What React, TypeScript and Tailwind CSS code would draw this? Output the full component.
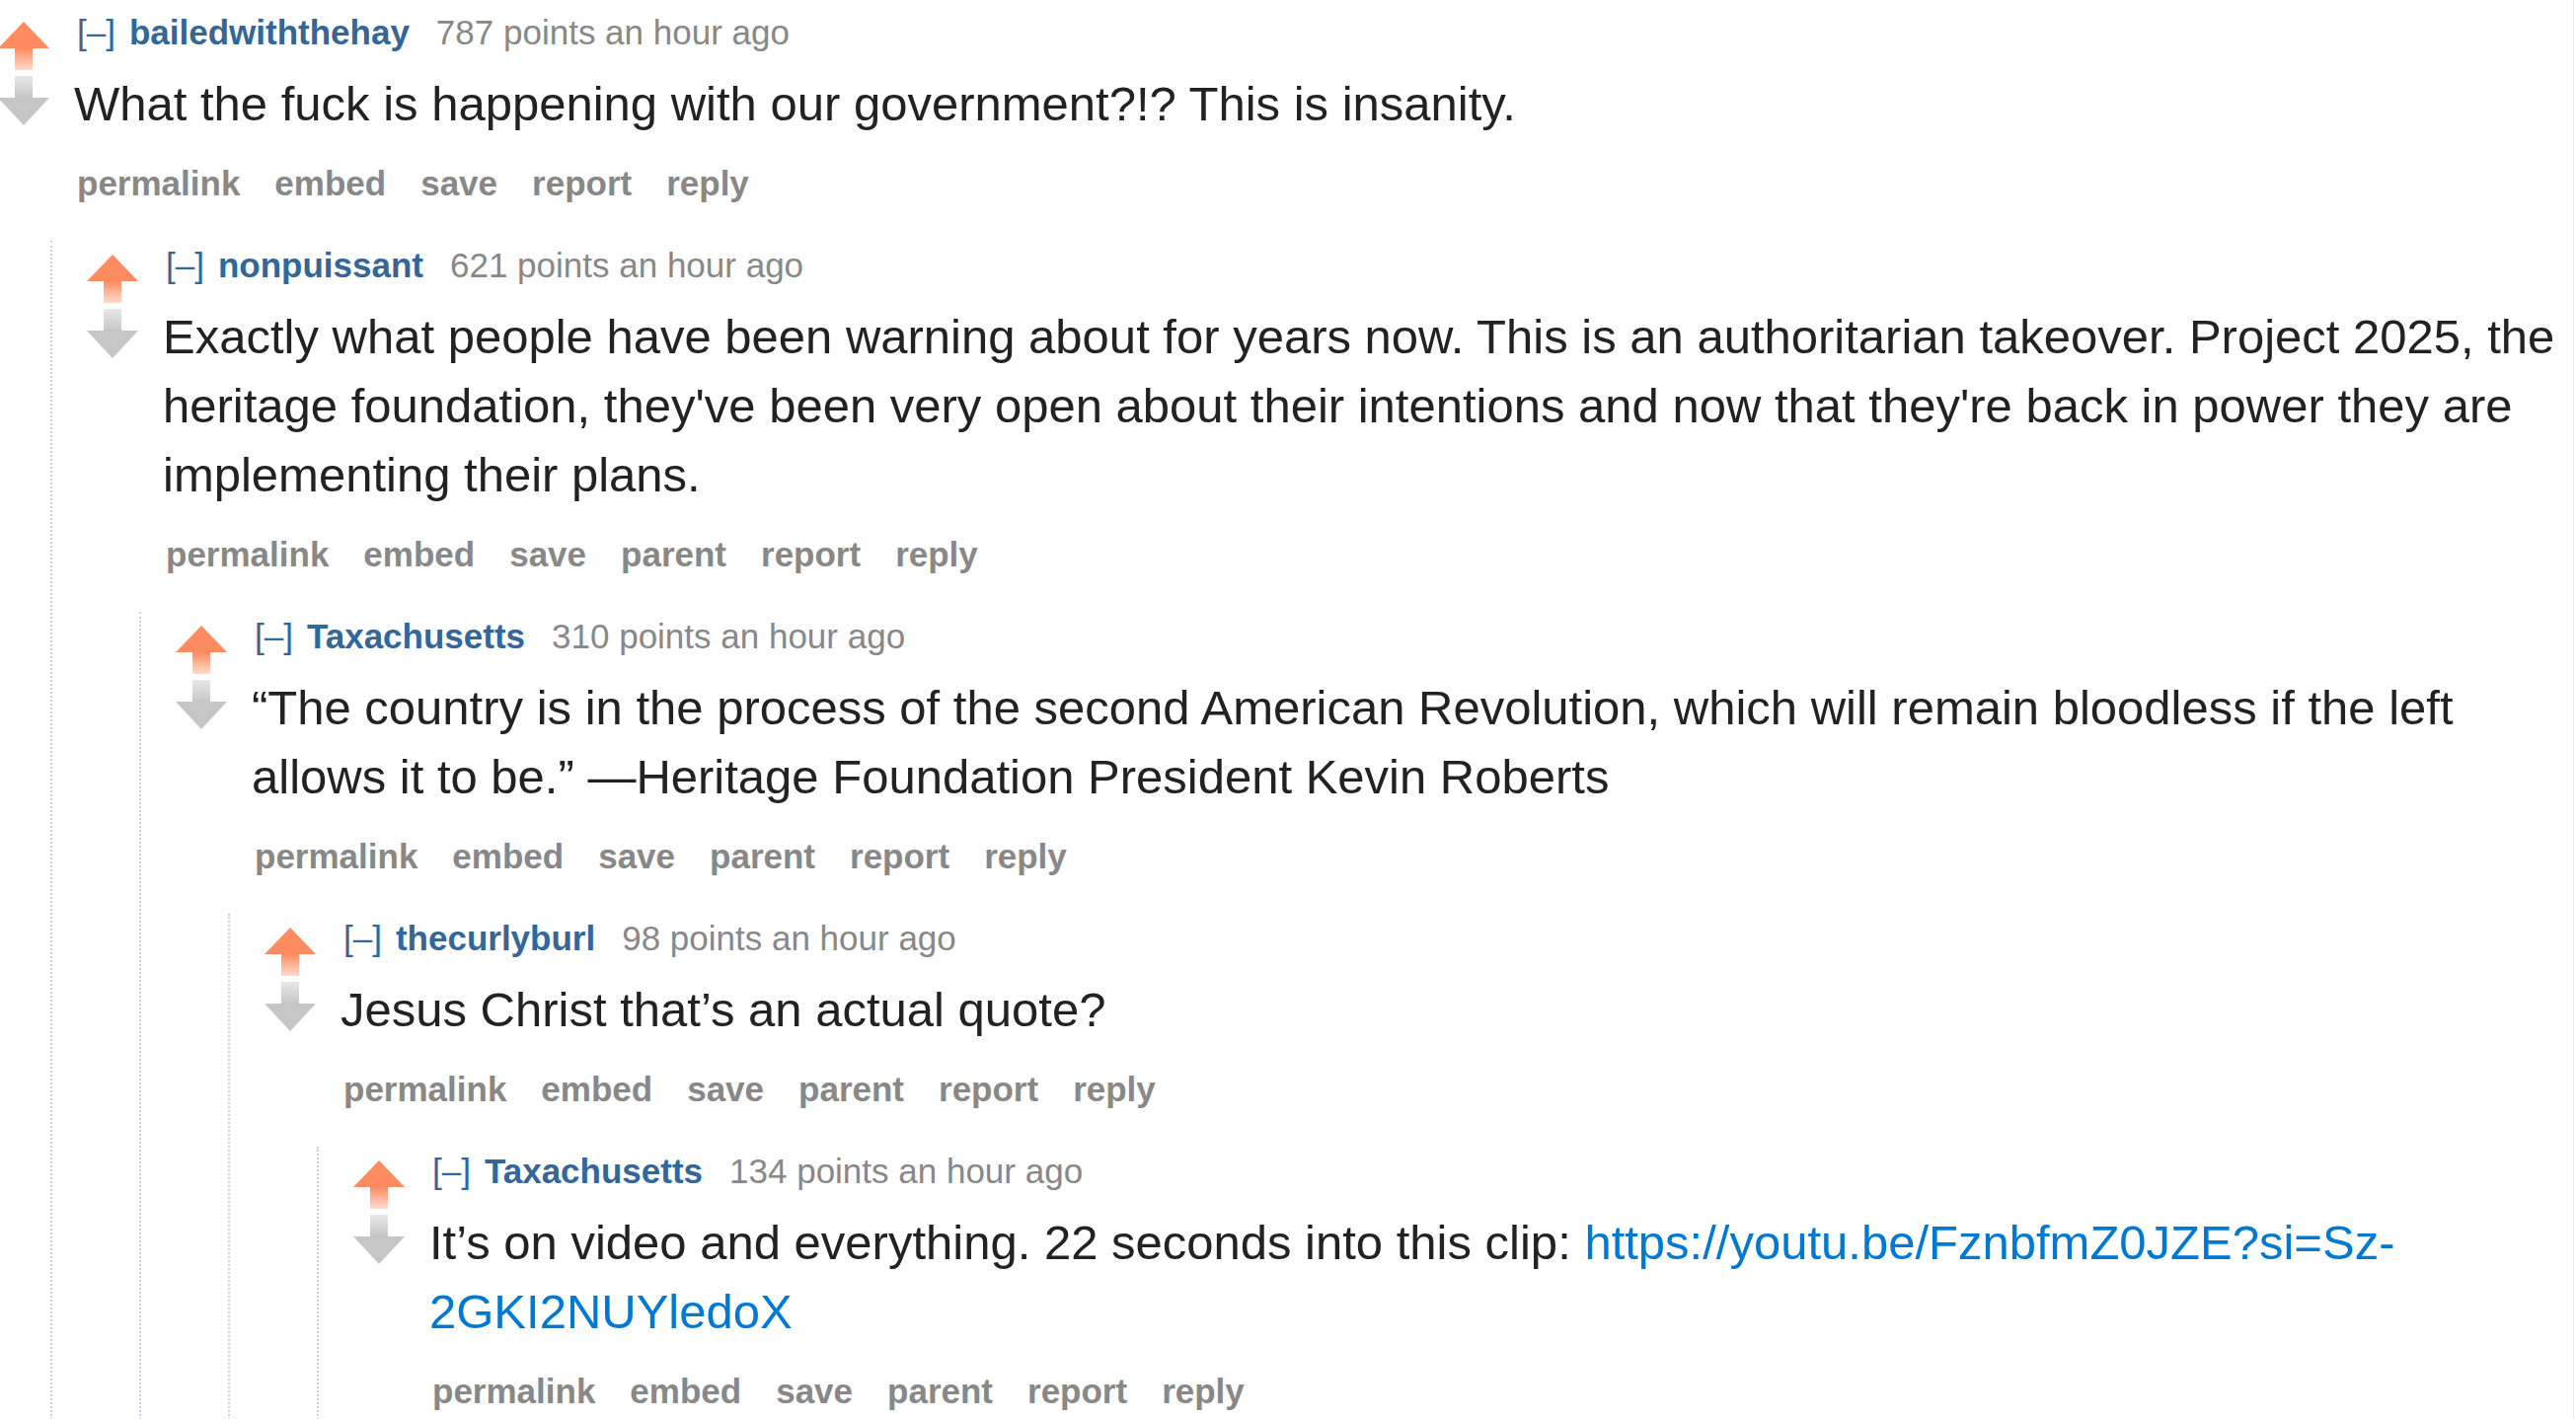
import { useId, type ReactNode } from "react";

type CommentData = {
  author: string;
  points: number;
  body: ReactNode;
  children?: CommentData[];
};

const thread: CommentData = {
  author: "bailedwiththehay",
  points: 787,
  body: "What the fuck is happening with our government?!? This is insanity.",
  children: [
    {
      author: "nonpuissant",
      points: 621,
      body: "Exactly what people have been warning about for years now. This is an authoritarian takeover. Project 2025, the heritage foundation, they've been very open about their intentions and now that they're back in power they are implementing their plans.",
      children: [
        {
          author: "Taxachusetts",
          points: 310,
          body: "“The country is in the process of the second American Revolution, which will remain bloodless if the left allows it to be.” —Heritage Foundation President Kevin Roberts",
          children: [
            {
              author: "thecurlyburl",
              points: 98,
              body: "Jesus Christ that’s an actual quote?",
              children: [
                {
                  author: "Taxachusetts",
                  points: 134,
                  body: (
                    <>
                      It’s on video and everything. 22 seconds into this clip:{" "}
                      <a href="#" className="text-[#0079d3]">
                        https://youtu.be/FznbfmZ0JZE?si=Sz-<wbr />2GKI2NUYledoX
                      </a>
                    </>
                  ),
                },
              ],
            },
          ],
        },
      ],
    },
  ],
};

function VoteArrows() {
  const id = useId();
  return (
    <div className="mt-[14px] mr-[25px] flex w-[52px] shrink-0 flex-col gap-[6px]">
      <svg width="52" height="49" viewBox="0 0 52 49">
        <defs>
          <linearGradient id={`${id}up`} x1="0" y1="0" x2="0" y2="1">
            <stop offset="0" stopColor="#ff8b60" />
            <stop offset="1" stopColor="#ffdccd" />
          </linearGradient>
        </defs>
        <polygon points="26,0 52,27 0,27" fill="#ff8b60" />
        <rect x="17" y="27" width="18" height="22" fill={`url(#${id}up)`} />
      </svg>
      <svg width="52" height="50" viewBox="0 0 52 50">
        <defs>
          <linearGradient id={`${id}down`} x1="0" y1="0" x2="0" y2="1">
            <stop offset="0" stopColor="#e8e8e8" />
            <stop offset="1" stopColor="#c6c6c6" />
          </linearGradient>
        </defs>
        <rect x="17" y="0" width="18" height="22" fill={`url(#${id}down)`} />
        <polygon points="0,22 52,22 26,50" fill="#c6c6c6" />
      </svg>
    </div>
  );
}

function Comment({ comment, depth }: { comment: CommentData; depth: number }) {
  const actions =
    depth === 0
      ? ["permalink", "embed", "save", "report", "reply"]
      : ["permalink", "embed", "save", "parent", "report", "reply"];

  return (
    <div>
      <div className="flex">
        <VoteArrows />
        <div className="min-w-0 flex-1">
          <div className="flex items-baseline pl-[3px] text-[35px] leading-[50px]">
            <a href="#" className="mr-[14px] text-[#336699]">
              [–]
            </a>
            <a href="#" className="mr-[27px] font-bold text-[#336699]">
              {comment.author}
            </a>
            <span className="text-[#888888]">{comment.points} points an hour ago</span>
          </div>
          <p className="mt-[12px] text-[49px] leading-[70px] text-[#222222]">{comment.body}</p>
          <ul className="mt-[21px] flex gap-[35px] pl-[3px] text-[35px] font-bold leading-[50px] text-[#888888]">
            {actions.map((action) => (
              <li key={action}>
                <a href="#">{action}</a>
              </li>
            ))}
          </ul>
        </div>
      </div>
      {comment.children && (
        <div className="mt-[33px] ml-[53px] border-l-2 border-dotted border-[#cfcff3] pb-4 pl-[35px]">
          {comment.children.map((child) => (
            <Comment key={child.author + child.points} comment={child} depth={depth + 1} />
          ))}
        </div>
      )}
    </div>
  );
}

export default function App() {
  return (
    <div className="h-[1438px] w-[2608px] overflow-hidden border-r border-[#e8e8e8] bg-white font-['Liberation_Sans',Arial,sans-serif]">
      <div className="-ml-[2px] pt-[8px] pr-[8px]">
        <Comment comment={thread} depth={0} />
      </div>
    </div>
  );
}
